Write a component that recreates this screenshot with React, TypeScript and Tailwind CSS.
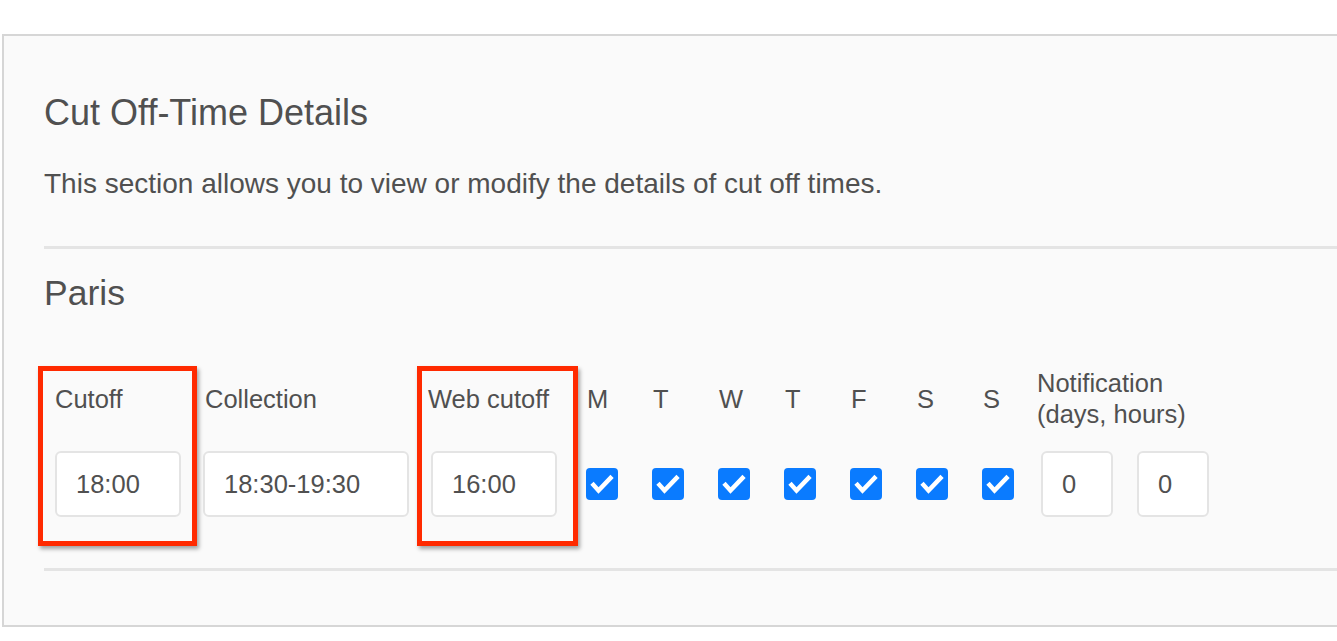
import React from 'react';

const days = ['M', 'T', 'W', 'T', 'F', 'S', 'S'];

const Checkbox = () => (
  <svg width="32" height="32" viewBox="0 0 32 32">
    <rect x="0" y="0" width="32" height="32" rx="4" fill="#0a7bff" />
    <polyline
      points="7.5,17 12.5,22.5 24.5,10"
      fill="none"
      stroke="#ffffff"
      strokeWidth="4.5"
      strokeLinecap="square"
      strokeLinejoin="miter"
    />
  </svg>
);

const TimeInput = ({ value, width }: { value: string; width: string }) => (
  <div className={`${width} h-[66px] flex items-center pl-[19px] bg-white border-2 border-[#e4e4e4] rounded-[6px] text-[25.5px]`}>
    {value}
  </div>
);

// red annotation frame drawn over a column
const Highlight = ({ className }: { className: string }) => (
  <div className={`absolute ${className} border-[5px] border-[#ff2a00] shadow-[2px_3px_4px_rgba(0,0,0,0.35)] pointer-events-none`} />
);

export default function App() {
  return (
    <div className="min-h-screen bg-white text-[#505050] overflow-hidden" style={{ fontFamily: '"Liberation Sans", Arial, sans-serif' }}>
      <div className="ml-[2px] mt-[34px] border-l-2 border-y-2 border-[#d6d6d6] bg-[#fafafa] pl-[40px] pt-[57px] pb-[54px]">
        <h2 className="text-[36px] leading-[40px]">Cut Off-Time Details</h2>
        <p className="mt-[35px] text-[28px] leading-[32px]">
          This section allows you to view or modify the details of cut off times.
        </p>
        <div className="mt-[46px] h-[3px] bg-[#e4e4e4]" />

        <h3 className="mt-[24px] text-[35.5px] leading-[40px]">Paris</h3>

        <div className="mt-[55px] flex text-[25.5px] leading-[31px]">
          {/* Cutoff */}
          <div className="relative ml-[11px] w-[126px] flex flex-col">
            <div className="h-[62px] flex items-center">Cutoff</div>
            <div className="mt-[21px]">
              <TimeInput value="18:00" width="w-[126px]" />
            </div>
            <Highlight className="-left-[17px] -right-[16px] -top-[2px] -bottom-[29px]" />
          </div>

          {/* Collection */}
          <div className="ml-[22px] w-[206px] flex flex-col">
            <div className="h-[62px] flex items-center pl-[2px]">Collection</div>
            <div className="mt-[21px]">
              <TimeInput value="18:30-19:30" width="w-[206px]" />
            </div>
          </div>

          {/* Web cutoff */}
          <div className="relative ml-[22px] w-[126px] flex flex-col">
            <div className="h-[62px] flex items-center -ml-[3px] whitespace-nowrap">Web cutoff</div>
            <div className="mt-[21px]">
              <TimeInput value="16:00" width="w-[126px]" />
            </div>
            <Highlight className="-left-[14px] -right-[21px] -top-[2px] -bottom-[29px]" />
          </div>

          {/* Days */}
          <div className="ml-[29px] flex gap-[34px]">
            {days.map((d, i) => (
              <div key={i} className="w-[32px] flex flex-col">
                <div className="h-[62px] flex items-center pl-[1px]">{d}</div>
                <div className="mt-[21px] h-[66px] flex items-center">
                  <Checkbox />
                </div>
              </div>
            ))}
          </div>

          {/* Notification */}
          <div className="ml-[23px] flex flex-col">
            <div className="h-[62px] flex items-center">
              Notification
              <br />
              (days, hours)
            </div>
            <div className="mt-[21px] ml-[4px] flex gap-[24px]">
              <TimeInput value="0" width="w-[72px]" />
              <TimeInput value="0" width="w-[72px]" />
            </div>
          </div>
        </div>

        <div className="mt-[51px] h-[3px] bg-[#e4e4e4]" />
      </div>
    </div>
  );
}
